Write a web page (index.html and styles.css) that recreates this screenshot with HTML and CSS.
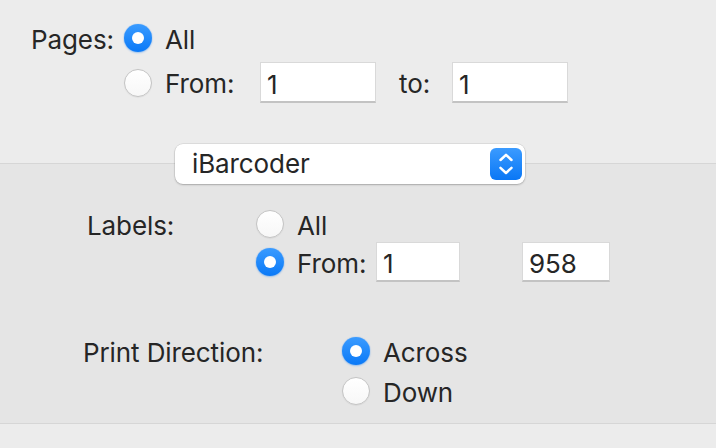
FILE: index.html
```html
<!DOCTYPE html>
<html>
<head>
<meta charset="utf-8">
<link rel="stylesheet" href="styles.css">
</head>
<body>
<div class="sheet">
  <section class="pages">
    <div class="pages-grid">
      <span class="label">Pages:</span>
      <div class="opt"><span class="radio on"></span><span class="opt-text">All</span></div>
      <div class="opt from-row">
        <span class="radio"></span><span class="opt-text pages-from">From:</span>
        <span class="field pages-field">1</span>
        <span class="opt-text to">to:</span>
        <span class="field pages-field">1</span>
      </div>
    </div>
  </section>
  <section class="options">
    <div class="popup">
      <span class="popup-text">iBarcoder</span>
      <span class="stepper">
        <svg width="32" height="32" viewBox="0 0 32 32"><path d="M10.5 12 L16 6.8 L21.5 12 M10.5 19.8 L16 25 L21.5 19.8" fill="none" stroke="#fff" stroke-width="2.5" stroke-linecap="round" stroke-linejoin="round"/></svg>
      </span>
    </div>
    <div class="labels-grid">
      <span class="label">Labels:</span>
      <div class="opt"><span class="radio"></span><span class="opt-text">All</span></div>
      <div class="opt from-row">
        <span class="radio on"></span><span class="opt-text labels-from">From:</span>
        <span class="field labels-first">1</span>
        <span class="field labels-last">958</span>
      </div>
    </div>
    <div class="dir-grid">
      <span class="label">Print Direction:</span>
      <div class="opt"><span class="radio on"></span><span class="opt-text">Across</span></div>
      <div class="opt"><span class="radio"></span><span class="opt-text">Down</span></div>
    </div>
  </section>
  <div class="footer"></div>
</div>
</body>
</html>
```
FILE: styles.css
```css
* { box-sizing: border-box; }
html, body { margin: 0; padding: 0; }
body {
  font-family: Inter, "Noto Sans", sans-serif;
  font-size: 26px;
  color: #262626;
  background: #ececec;
  letter-spacing: -0.1px;
}
.sheet {
  width: 716px;
  height: 448px;
  display: flex;
  flex-direction: column;
  overflow: hidden;
}
.pages {
  height: 163px;
  padding: 24px 0 0 31px;
  background: #ececec;
}
.pages-grid {
  display: grid;
  grid-template-columns: 93px auto;
  grid-template-rows: 28px 41px;
  row-gap: 10px;
  align-items: center;
}
.label {
  line-height: 28px;
  padding-top: 3px;
  align-self: center;
  white-space: nowrap;
}
.opt {
  display: flex;
  align-items: center;
  height: 28px;
}
.from-row { grid-column: 2; height: auto; }
.radio {
  flex: none;
  width: 28px;
  height: 28px;
  border-radius: 50%;
  background: linear-gradient(#ffffff, #f7f7f7);
  border: 1px solid #c4c4c4;
  box-shadow: 0 0.5px 1px rgba(0,0,0,0.08);
  margin-right: 13px;
  display: flex;
  align-items: center;
  justify-content: center;
}
.radio.on {
  border: none;
  background: linear-gradient(#3a9bff, #0a79f7);
  box-shadow: 0 0 1px rgba(10,121,247,0.6), 0 1px 2px rgba(10,121,247,0.3);
}
.radio.on::after {
  content: "";
  width: 12px;
  height: 12px;
  border-radius: 50%;
  background: #fff;
}
.opt-text {
  white-space: nowrap;
  line-height: 28px;
  padding-top: 3px;
}
.pages-from { width: 95px; }
.field {
  display: block;
  height: 41px;
  line-height: 36px;
  padding: 4px 0 0 6px;
  background: #fff;
  border: 1px solid #d9d9d9;
  border-bottom: 2px solid #c3c3c3;
}
.pages-field { width: 116px; }
.to { width: 53px; margin-left: 23px; }
.options {
  flex: none;
  background: #e5e5e5;
  border-top: 1px solid #d6d6d6;
  padding-bottom: 18px;
}
.popup {
  margin: -20px 0 0 175px;
  width: 350px;
  height: 40px;
  background: #fff;
  border-radius: 8px;
  box-shadow: 0 0 0 0.5px rgba(0,0,0,0.12), 0 1px 2px rgba(0,0,0,0.22);
  display: flex;
  align-items: center;
  justify-content: space-between;
  padding: 0 3px 0 17px;
}
.popup-text { line-height: 40px; }
.stepper {
  width: 32px;
  height: 32px;
  border-radius: 6px;
  background: linear-gradient(#3b9bff, #0a77f5);
  display: flex;
}
.labels-grid {
  margin-top: 26px;
  padding-left: 87px;
  display: grid;
  grid-template-columns: 169px auto;
  grid-template-rows: 28px 40px;
  row-gap: 4px;
  align-items: center;
}
.labels-grid .field { height: 40px; line-height: 36px; padding-top: 3px; }
.labels-from { width: 79px; }
.labels-first { width: 84px; }
.labels-last { width: 88px; margin-left: 62px; }
.dir-grid {
  margin-top: 55px;
  padding-left: 83px;
  display: grid;
  grid-template-columns: 259px auto;
  grid-template-rows: 28px 28px;
  row-gap: 12px;
}
.dir-grid .opt { grid-column: 2; }
.dir-grid .label { grid-row: 1; }
.footer {
  flex: 1;
  background: #ececec;
  border-top: 1px solid #d6d6d6;
}
```
